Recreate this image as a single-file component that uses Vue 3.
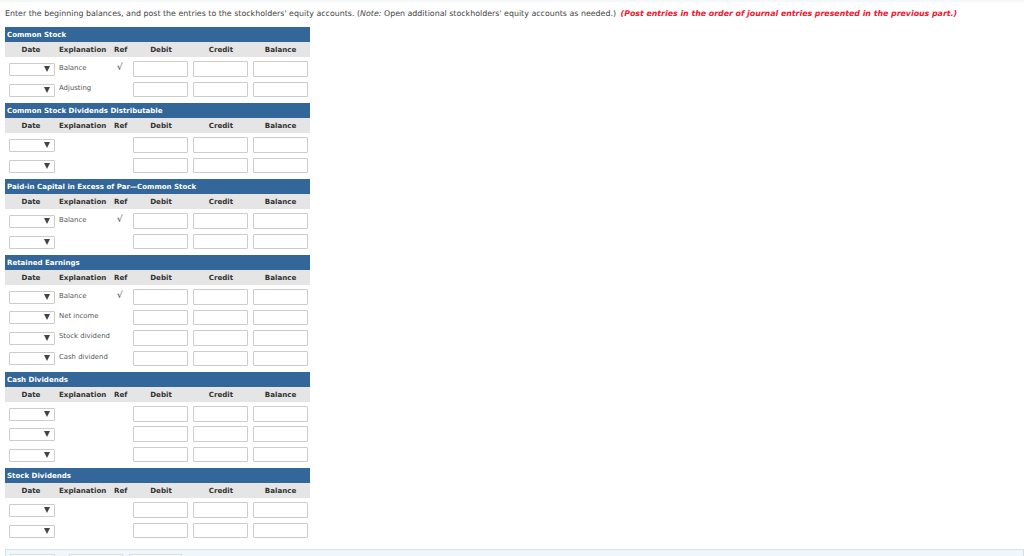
<template>
  <div class="page">
    <div class="top-strip"></div>
    <p class="intro">
      Enter the beginning balances, and post the entries to the stockholders' equity accounts. (<i>Note:</i> Open additional stockholders' equity accounts as needed.)
      <b class="warn">(Post entries in the order of journal entries presented in the previous part.)</b>
    </p>

    <div class="ledgers">
      <section v-for="acc in accounts" :key="acc.name" class="ledger">
        <h3 class="ledger-title">{{ acc.name }}</h3>
        <div class="col-head">
          <span v-for="col in columns" :key="col.label" :class="col.cls">{{ col.label }}</span>
        </div>
        <div v-for="(row, i) in acc.rows" :key="i" class="row">
          <div class="date-select"><span class="arrow"></span></div>
          <span class="expl">{{ row.text }}</span>
          <span class="ref">{{ row.check ? '√' : '' }}</span>
          <div class="amount"></div>
          <div class="amount"></div>
          <div class="amount"></div>
        </div>
      </section>
    </div>

    <div class="bottom-bar">
      <span class="bar-btn first"></span>
      <span class="bar-btn second"></span>
      <span class="bar-btn"></span>
    </div>
  </div>
</template>

<script setup>
const columns = [
  { label: 'Date', cls: 'c' },
  { label: 'Explanation', cls: 'l' },
  { label: 'Ref', cls: 'l ref-head' },
  { label: 'Debit', cls: 'c' },
  { label: 'Credit', cls: 'c' },
  { label: 'Balance', cls: 'c' }
]

const balance = { text: 'Balance', check: true }
const blank = { text: '', check: false }

const accounts = [
  { name: 'Common Stock', rows: [balance, { text: 'Adjusting' }] },
  { name: 'Common Stock Dividends Distributable', rows: [blank, blank] },
  { name: 'Paid-in Capital in Excess of Par—Common Stock', rows: [balance, blank] },
  {
    name: 'Retained Earnings',
    rows: [balance, { text: 'Net income' }, { text: 'Stock dividend' }, { text: 'Cash dividend' }]
  },
  { name: 'Cash Dividends', rows: [blank, blank, blank] },
  { name: 'Stock Dividends', rows: [blank, blank] }
]
</script>

<style>
html, body {
  margin: 0;
  height: 100%;
  overflow: hidden;
  background: #fff;
}
</style>

<style scoped>
.page {
  height: 556px;
  overflow: hidden;
  display: flex;
  flex-direction: column;
  font-family: 'DejaVu Sans', Verdana, sans-serif;
  color: #333;
}

.top-strip {
  height: 2px;
  background: #f5f8fb;
}

.intro {
  margin: 0;
  padding: 6px 0 0 5px;
  height: 19px;
  box-sizing: border-box;
  font-size: 7.9px;
  line-height: 11px;
  white-space: nowrap;
  color: #444;
}

.warn {
  color: #f5142c;
  font-style: italic;
  margin-left: 2px;
  font-size: 7.85px;
}

.ledgers {
  padding: 6px 0 0 5px;
  width: 305px;
}

.ledger {
  padding-bottom: 5.2px;
}

.ledger-title {
  margin: 0;
  height: 15px;
  padding-left: 2px;
  font-size: 7.05px;
  line-height: 15px;
  font-weight: 700;
  color: #fff;
  background: #336699;
  white-space: nowrap;
}

.col-head,
.row {
  display: grid;
  grid-template-columns: 52px 54px 20px 60px 60px 59px;
  align-items: center;
}

.col-head {
  height: 15px;
  background: #e5e5e5;
  font-size: 7.1px;
  font-weight: 700;
  color: #333;
}

.col-head .c {
  text-align: center;
}

.col-head .l {
  padding-left: 2px;
}

.col-head .ref-head {
  padding-left: 3px;
}

.row {
  height: 20.4px;
  position: relative;
  top: 2px;
}

.date-select {
  position: relative;
  width: 44px;
  height: 11px;
  margin: 1px 0 0 4px;
  background: #fff;
  border: 1px solid #ccc;
  border-radius: 1px;
}

.arrow {
  position: absolute;
  right: 4px;
  top: 2px;
  width: 0;
  height: 0;
  border-left: 3px solid transparent;
  border-right: 3px solid transparent;
  border-top: 6px solid #444;
}

.expl {
  padding-left: 2px;
  margin-bottom: 3px;
  font-size: 6.9px;
  color: #555;
  white-space: nowrap;
}

.ref {
  padding-left: 6px;
  margin-bottom: 4px;
  font-size: 9px;
  color: #444;
}

.amount {
  width: 53px;
  height: 13.5px;
  margin-left: 2px;
  background: #fff;
  border: 1px solid #ccc;
  border-radius: 1px;
}

.bottom-bar {
  position: absolute;
  left: 5px;
  right: 0;
  top: 549px;
  height: 20px;
  box-sizing: border-box;
  display: flex;
  gap: 6px;
  padding: 4px 4px;
  background: #f1f6fb;
  border: 1px solid #d5e0ec;
}

.bar-btn {
  width: 51px;
  height: 14px;
  background: #fff;
  border: 1px solid #d5dde6;
}

.bar-btn.first {
  width: 43px;
  margin-right: 8px;
}

.bar-btn.second {
  width: 52px;
}
</style>
